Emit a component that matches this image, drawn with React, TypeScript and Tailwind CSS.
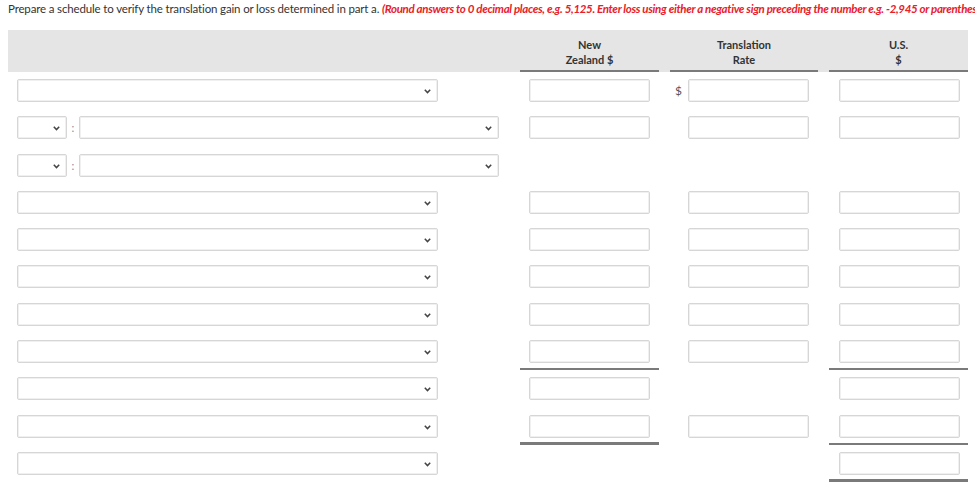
import React from "react";

const font = { fontFamily: "Lato, 'Open Sans', sans-serif" };

function Chevron() {
  return (
    <svg width="7" height="5" viewBox="0 0 7 5" className="absolute right-[6px] top-[9px]">
      <path d="M0.8 0.8 L3.5 3.6 L6.2 0.8" fill="none" stroke="#444" strokeWidth="1.5" />
    </svg>
  );
}

function Select({ w }: { w: string }) {
  return (
    <div className={`relative h-[23px] ${w} border border-[#d6d6d6] rounded-[2px] bg-white shadow-[inset_0_0_0_1px_#f0f0f0]`}>
      <Chevron />
    </div>
  );
}

function Input() {
  return <div className="h-[23px] w-[121px] border border-[#d6d6d6] rounded-[2px] bg-white shadow-[inset_0_0_0_1px_#f0f0f0]" />;
}

type Line = "none" | "single" | "double";

function lineCls(l: Line) {
  if (l === "single") return "border-b-2 border-[#7a7a7a]";
  if (l === "double") return "border-b-[3px] border-[#7a7a7a]";
  return "";
}

type Row = {
  label: "select" | "split";
  nz: boolean;
  rate: boolean;
  us: boolean;
  dollar?: boolean;
  nzLine?: Line;
  usLine?: Line;
};

const rows: Row[] = [
  { label: "select", nz: true, rate: true, us: true, dollar: true },
  { label: "split", nz: true, rate: true, us: true },
  { label: "split", nz: false, rate: false, us: false },
  { label: "select", nz: true, rate: true, us: true },
  { label: "select", nz: true, rate: true, us: true },
  { label: "select", nz: true, rate: true, us: true },
  { label: "select", nz: true, rate: true, us: true },
  { label: "select", nz: true, rate: true, us: true, nzLine: "single", usLine: "single" },
  { label: "select", nz: true, rate: false, us: true },
  { label: "select", nz: true, rate: true, us: true, nzLine: "double", usLine: "single" },
  { label: "select", nz: false, rate: false, us: true, usLine: "double" },
];

export default function App() {
  return (
    <div className="w-[975px] h-[491px] overflow-hidden bg-white text-[#333]" style={font}>
      <div className="pl-[8px] pt-[1px] h-[30px] whitespace-nowrap overflow-hidden text-[11.5px] leading-[15px]">
        <span className="text-[#333] tracking-[-0.15px]">Prepare a schedule to verify the translation gain or loss determined in part a. </span>
        <span className="text-[#e8202a] font-bold italic tracking-[-0.32px]">
          (Round answers to 0 decimal places, e.g. 5,125. Enter loss using either a negative sign preceding the number e.g. -2,945 or parentheses e.g. (2,945).)
        </span>
      </div>
      <div className="ml-[8px] w-[960px]">
        <div className="flex h-[42px] bg-[#e5e5e5] text-[11px] font-bold leading-[15px] text-[#333]">
          <div className="w-[512px]" />
          <div className="w-[139px] flex flex-col items-center justify-center pt-[3px] border-b-2 border-[#7a7a7a]">
            <span>New</span>
            <span>Zealand $</span>
          </div>
          <div className="w-[11px]" />
          <div className="w-[148px] flex flex-col items-center justify-center pt-[3px] border-b-2 border-[#7a7a7a]">
            <span>Translation</span>
            <span>Rate</span>
          </div>
          <div className="w-[11px]" />
          <div className="w-[139px] flex flex-col items-center justify-center pt-[3px] border-b-2 border-[#7a7a7a]">
            <span>U.S.</span>
            <span>$</span>
          </div>
        </div>
        {rows.map((r, i) => (
          <div key={i} className="flex h-[37.3px]">
            <div className="w-[512px] pl-[9px] pt-[7px]">
              {r.label === "select" ? (
                <Select w="w-[421px]" />
              ) : (
                <div className="flex items-center">
                  <Select w="w-[50px]" />
                  <span className="w-[12px] text-center text-[11px] leading-[23px] text-[#7b8aa0]">:</span>
                  <Select w="w-[420px]" />
                </div>
              )}
            </div>
            <div className={`w-[139px] pl-[9px] pt-[7px] box-border ${lineCls(r.nzLine ?? "none")}`}>
              {r.nz && <Input />}
            </div>
            <div className="w-[11px]" />
            <div className="w-[148px] pt-[7px] flex">
              <div className="w-[18px] text-[12px] leading-[23px] text-[#556] pl-[5px]">{r.dollar ? "$" : ""}</div>
              {r.rate && <Input />}
            </div>
            <div className="w-[11px]" />
            <div className={`w-[139px] pl-[10px] pt-[7px] box-border ${lineCls(r.usLine ?? "none")}`}>
              {r.us && <Input />}
            </div>
          </div>
        ))}
      </div>
    </div>
  );
}
